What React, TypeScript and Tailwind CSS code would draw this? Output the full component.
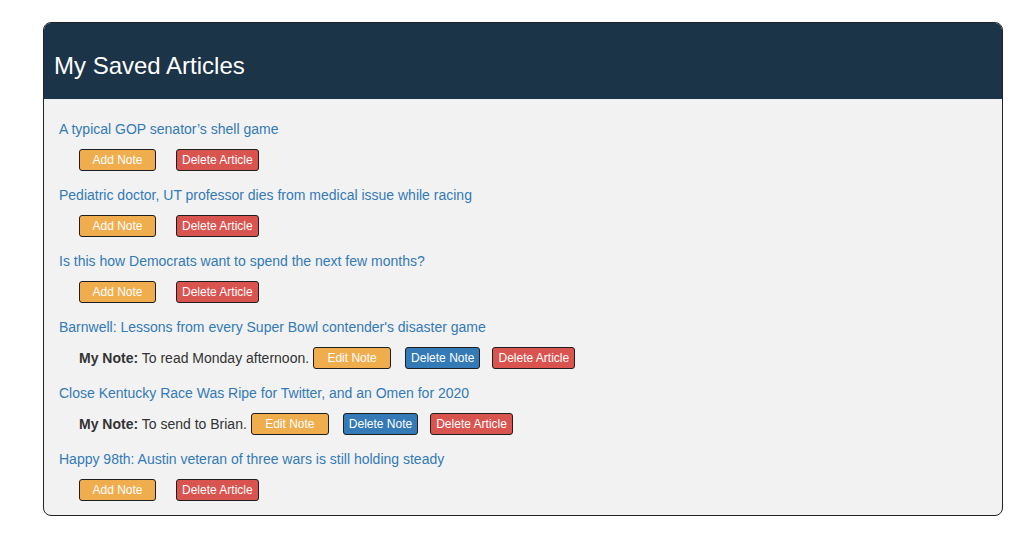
import React from 'react';

type Article = {
  title: string;
  note?: string;
};

const articles: Article[] = [
  { title: 'A typical GOP senator’s shell game' },
  { title: 'Pediatric doctor, UT professor dies from medical issue while racing' },
  { title: 'Is this how Democrats want to spend the next few months?' },
  { title: "Barnwell: Lessons from every Super Bowl contender's disaster game", note: 'To read Monday afternoon.' },
  { title: 'Close Kentucky Race Was Ripe for Twitter, and an Omen for 2020', note: 'To send to Brian.' },
  { title: 'Happy 98th: Austin veteran of three wars is still holding steady' },
];

const btn = 'border border-[#1e1e1e] rounded-[3px] text-white text-[12px] leading-[18px] py-px';

const ArticleRow: React.FC<{ article: Article }> = ({ article }) => (
  <div className="mb-[14px]">
    <a href="#" className="block text-[14px] leading-[20px] text-[#337ab7]">
      {article.title}
    </a>
    <div className="flex items-center mt-[10px] ml-[20px] h-[22px] text-[14px] text-[#333]">
      {article.note ? (
        <>
          <span>
            <b>My Note:</b> {article.note}
          </span>
          <button className={`${btn} ml-[4px] w-[78px] bg-[#f0ad4e]`}>Edit Note</button>
          <button className={`${btn} ml-[14px] px-[5px] bg-[#337ab7]`}>Delete Note</button>
          <button className={`${btn} ml-[12px] px-[5px] bg-[#d9534f]`}>Delete Article</button>
        </>
      ) : (
        <>
          <button className={`${btn} w-[77px] bg-[#f0ad4e]`}>Add Note</button>
          <button className={`${btn} ml-[20px] px-[5px] bg-[#d9534f]`}>Delete Article</button>
        </>
      )}
    </div>
  </div>
);

const App: React.FC = () => {
  return (
    <div className="min-h-[546px] bg-white pt-[22px] font-['Liberation_Sans',Arial,sans-serif]">
      <div className="ml-[43px] w-[960px] border border-[#222] rounded-[8px] overflow-hidden bg-[#f2f2f2]">
        <header className="bg-[#1b3447] pl-[10px] pt-[31px] pb-[21px]">
          <h1 className="text-[24px] leading-[24px] text-white">My Saved Articles</h1>
        </header>
        <main className="pl-[15px] pt-[20px]">
          {articles.map((a) => (
            <ArticleRow key={a.title} article={a} />
          ))}
        </main>
      </div>
    </div>
  );
};

export default App;
